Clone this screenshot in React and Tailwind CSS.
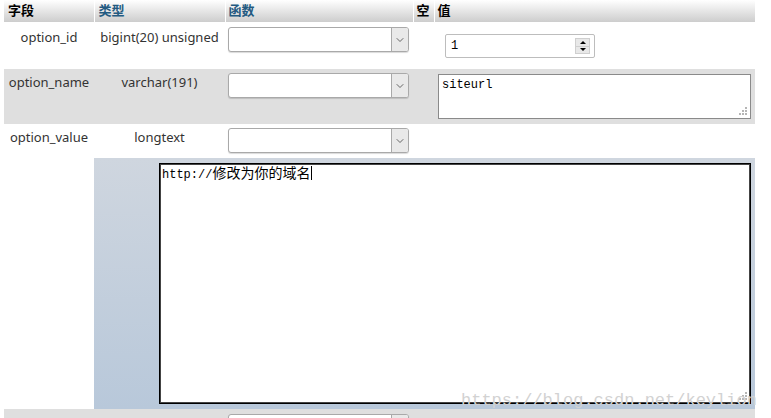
import { ChevronDown } from "lucide-react";

const font = { fontFamily: '"Noto Sans", "Noto Sans CJK SC", sans-serif' };

function FakeSelect() {
  return (
    <div className="flex h-[25px] w-[181px] rounded-[3px] border border-[#a9a9a9] bg-white shadow-[0_1px_1px_rgba(0,0,0,0.15)]">
      <div className="flex-1" />
      <div className="flex w-[17px] items-center justify-center rounded-r-[2px] border-l border-[#a9a9a9] bg-[#e9e9e9]">
        <ChevronDown size={12} strokeWidth={1.6} className="text-[#444]" />
      </div>
    </div>
  );
}

function Grip() {
  return (
    <svg width="8" height="8" viewBox="0 0 8 8" className="absolute bottom-[3px] right-[3px]">
      <rect x="6" y="0" width="2" height="2" fill="#b5b5b5" />
      <rect x="3" y="3" width="2" height="2" fill="#b5b5b5" />
      <rect x="6" y="3" width="2" height="2" fill="#b5b5b5" />
      <rect x="0" y="6" width="2" height="2" fill="#b5b5b5" />
      <rect x="3" y="6" width="2" height="2" fill="#b5b5b5" />
      <rect x="6" y="6" width="2" height="2" fill="#b5b5b5" />
    </svg>
  );
}

export default function App() {
  const mono = { fontFamily: '"Liberation Mono", "Noto Sans CJK SC", monospace' };
  return (
    <div className="relative h-[418px] w-[771px] overflow-hidden bg-white text-[13px] text-[#333]" style={font}>
      <table className="ml-[4px] w-[751px] table-fixed border-collapse">
        <colgroup>
          <col className="w-[90px]" />
          <col className="w-[131px]" />
          <col className="w-[188px]" />
          <col className="w-[21px]" />
          <col className="w-[321px]" />
        </colgroup>
        <thead>
          <tr className="h-[22px] bg-gradient-to-b from-white to-[#cdcdcd] text-left font-bold">
            <th className="border-r border-white pl-[4px] text-black">字段</th>
            <th className="border-r border-white pl-[4px] text-[#235a81]">类型</th>
            <th className="border-r border-white pl-[3px] text-[#235a81]">函数</th>
            <th className="border-r border-white pl-[3px] text-black">空</th>
            <th className="pl-[3px] text-black">值</th>
          </tr>
        </thead>
        <tbody>
          <tr className="h-[47px] align-top">
            <td className="pt-[6px] text-center">option_id</td>
            <td className="pt-[6px] text-center">bigint(20) unsigned</td>
            <td className="pl-[3px] pt-[5px]"><FakeSelect /></td>
            <td />
            <td className="pl-[11px] pt-[12px]">
              <div className="flex h-[24px] w-[150px] items-center rounded-[2px] border border-[#bdbdbd] bg-white pl-[5px] pr-[4px] text-[12px] text-black" style={mono}>
                <span className="flex-1">1</span>
                <div className="flex h-[16px] w-[15px] flex-col border border-[#cfcfcf] bg-[#e8e8e8]">
                  <div className="flex flex-1 items-center justify-center border-b border-[#cfcfcf]">
                    <div className="h-0 w-0 border-x-[3px] border-b-[3px] border-x-transparent border-b-black" />
                  </div>
                  <div className="flex flex-1 items-center justify-center">
                    <div className="h-0 w-0 border-x-[3px] border-t-[3px] border-x-transparent border-t-black" />
                  </div>
                </div>
              </div>
            </td>
          </tr>
          <tr className="h-[55px] bg-[#dfdfdf] align-top">
            <td className="pt-[4px] text-center">option_name</td>
            <td className="pt-[4px] text-center">varchar(191)</td>
            <td className="pl-[3px] pt-[4px]"><FakeSelect /></td>
            <td />
            <td className="pl-[4px] pt-[5px]">
              <div className="relative h-[45px] w-[313px] border border-[#8a8a8a] bg-white pl-[3px] pt-[1px] text-[12px] text-black" style={mono}>
                siteurl
                <Grip />
              </div>
            </td>
          </tr>
          <tr className="h-[34px] align-top">
            <td className="pt-[4px] text-center">option_value</td>
            <td className="pt-[4px] text-center">longtext</td>
            <td className="pl-[3px] pt-[4px]"><FakeSelect /></td>
            <td />
            <td />
          </tr>
          <tr className="h-[251px] align-top">
            <td className="bg-white" />
            <td colSpan={4} className="bg-gradient-to-b from-[#cfd6df] to-[#b8c8da] pl-[65px] pt-[5px]">
              <div className="relative h-[241px] w-[592px] border border-black bg-white pl-[2px] pt-[1px] leading-[16px] text-black shadow-[inset_0_0_0_1px_#444]">
                <span className="text-[12px]" style={mono}>http://</span>
                <span className="text-[14px]" style={font}>修改为你的域名</span>
                <span className="ml-px inline-block h-[14px] w-px bg-black align-[-2px]" />
                <Grip />
              </div>
            </td>
          </tr>
          <tr className="h-[30px] bg-[#dfdfdf] align-top">
            <td />
            <td />
            <td className="pl-[3px] pt-[5px]"><FakeSelect /></td>
            <td />
            <td />
          </tr>
        </tbody>
      </table>
      <div className="pointer-events-none absolute left-[461px] top-[388px] text-[17px] text-[#d2d2d2]" style={{ fontFamily: '"Liberation Mono", monospace' }}>
        https://blog.csdn.net/keylion
      </div>
    </div>
  );
}
